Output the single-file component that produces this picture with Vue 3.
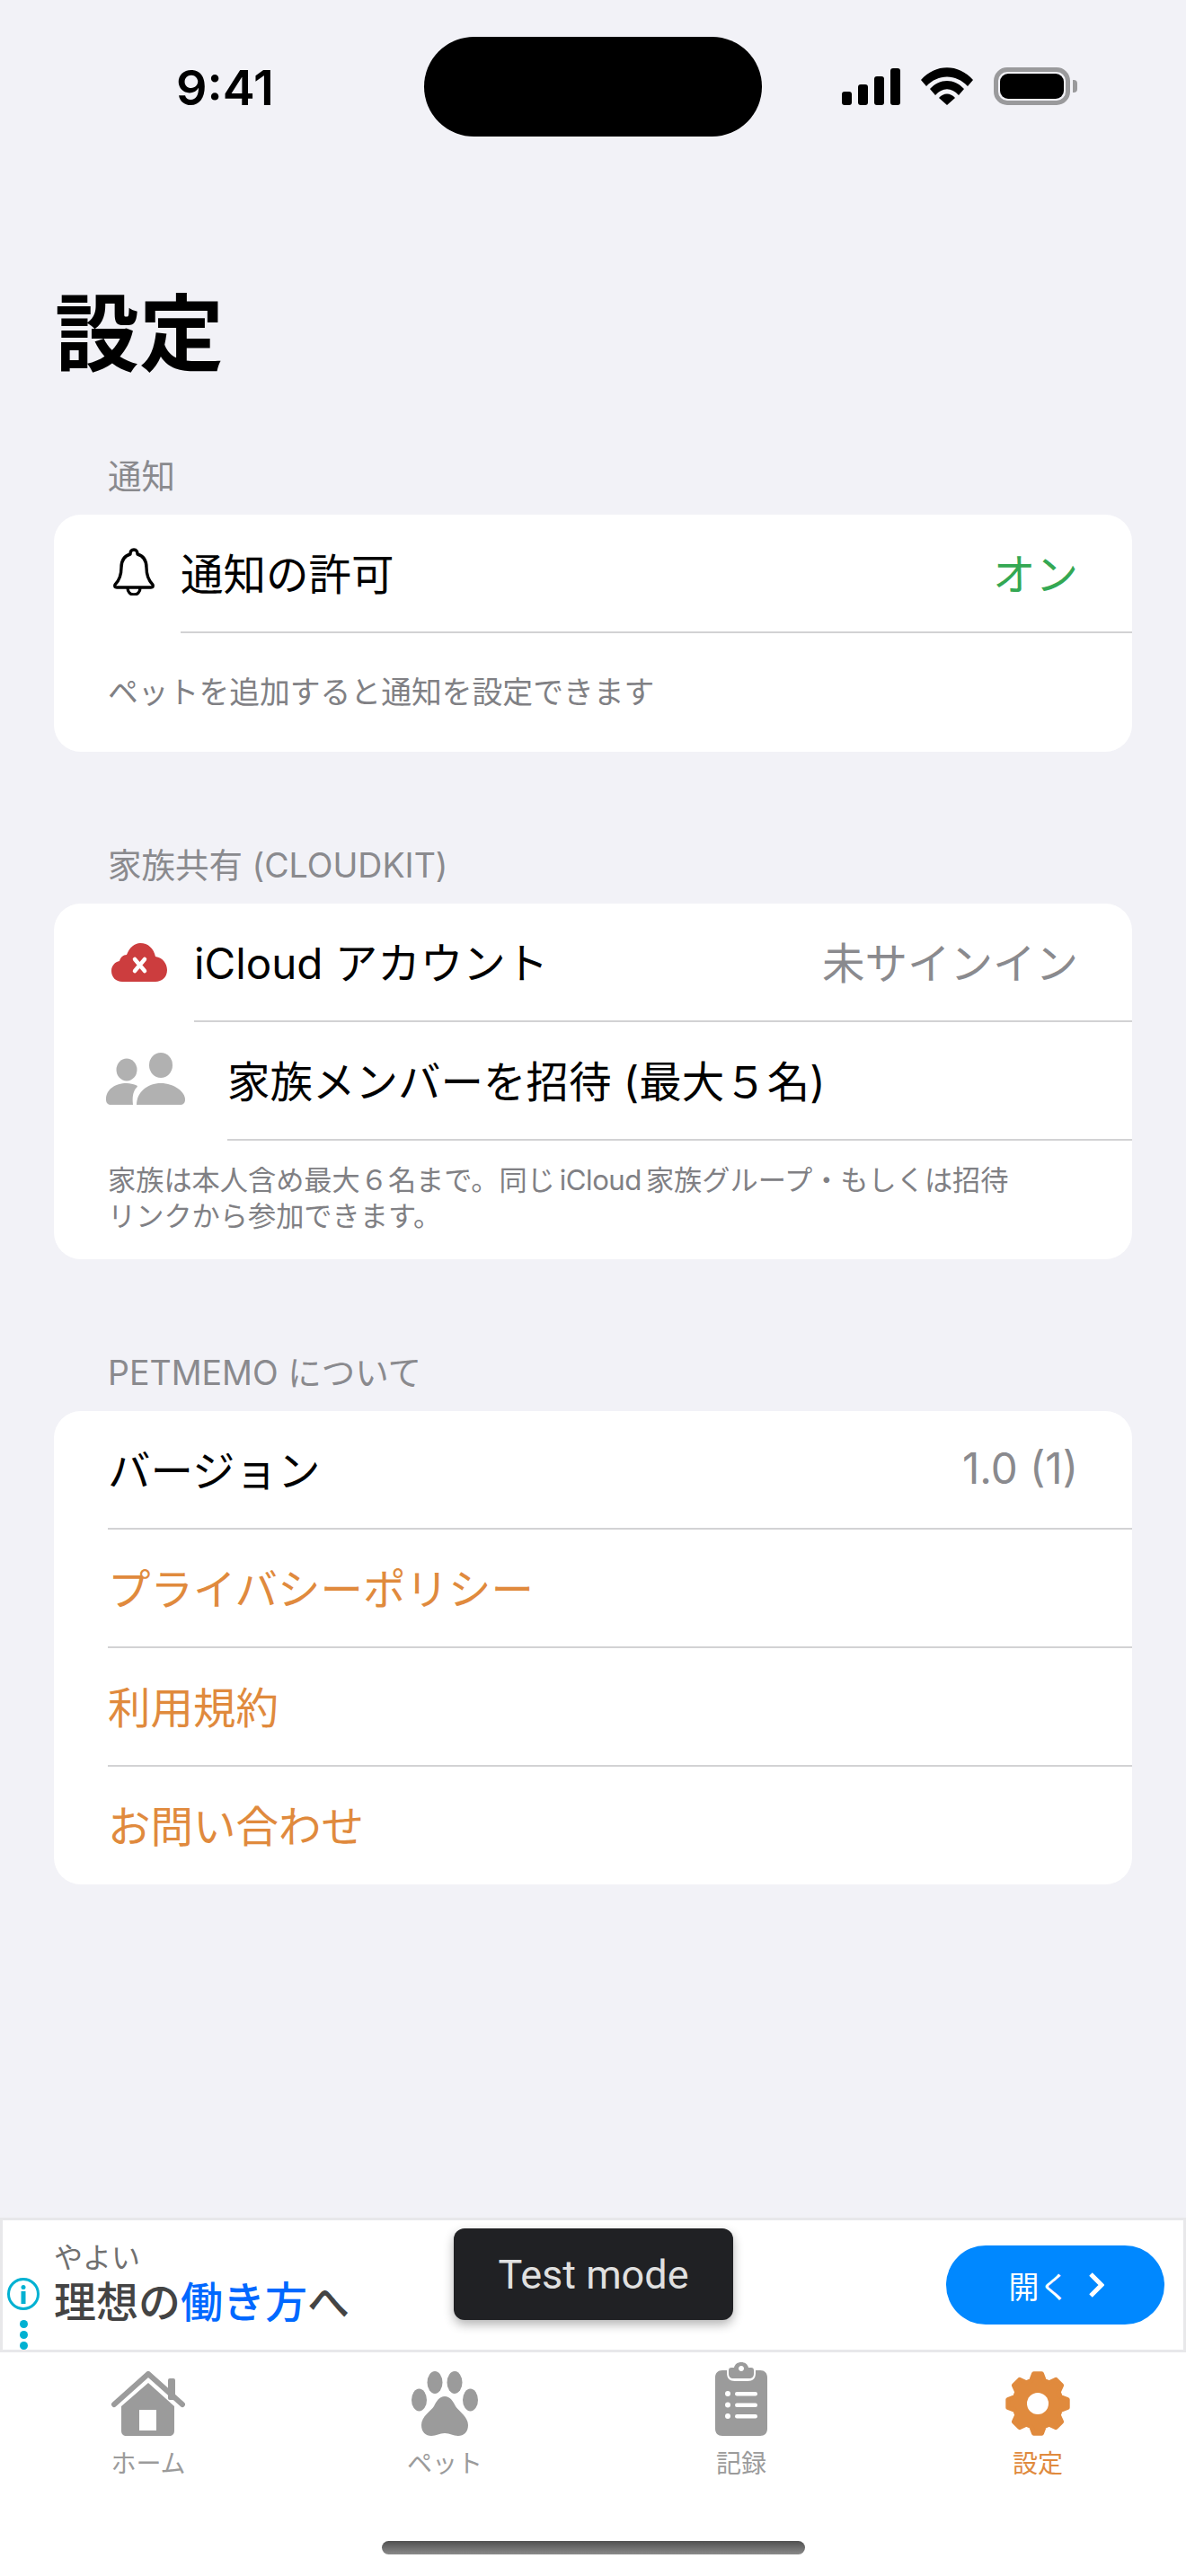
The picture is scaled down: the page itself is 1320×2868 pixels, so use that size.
<script setup>
const gearPath = (() => {
  // 8-tooth gear drawn around 36,36
  const teeth = 8
  const pts = []
  for (let i = 0; i < teeth; i++) {
    const a = (i * 2 * Math.PI) / teeth - Math.PI / 2
    const step = Math.PI / teeth
    const at = (r, d) => `${(36 + r * Math.cos(a + d)).toFixed(1)} ${(36 + r * Math.sin(a + d)).toFixed(1)}`
    pts.push(`${i ? 'L' : 'M'}${at(26.5, -step * 0.72)}`)
    pts.push(`L${at(33.5, -step * 0.34)}`)
    pts.push(`L${at(33.5, step * 0.34)}`)
    pts.push(`L${at(26.5, step * 0.72)}`)
  }
  return pts.join(' ') + ' Z'
})()

const aboutRows = [
  { label: 'バージョン', value: '1.0 (1)' },
  { label: 'プライバシーポリシー', link: true },
  { label: '利用規約', link: true },
  { label: 'お問い合わせ', link: true },
]
</script>

<template>
  <div class="screen">
    <!-- ステータスバー -->
    <header class="status">
      <span class="status__time">9:41</span>
      <span class="status__island"></span>
      <div class="status__icons">
        <svg class="ico-signal" viewBox="0 0 65 41" fill="#000">
          <rect x="0" y="26" width="11" height="15" rx="3" />
          <rect x="18" y="18" width="11" height="23" rx="3" />
          <rect x="36" y="9" width="11" height="32" rx="3" />
          <rect x="54" y="0" width="11" height="41" rx="3" />
        </svg>
        <svg class="ico-wifi" viewBox="0 0 58 42" fill="#000">
          <path d="M0 14C16-4.500 42-4.500 58 14L52 21C39 7 19 7 6 21Z" />
          <path d="M10 24C21 12 37 12 48 24L42 31C34 22 24 22 16 31Z" />
          <path d="M20 34C25 28 33 28 38 34L29 42Z" />
        </svg>
        <div class="battery">
          <div class="battery__body"><div class="battery__fill"></div></div>
          <div class="battery__nub"></div>
        </div>
      </div>
    </header>

    <main class="content">
      <h1 class="title">設定</h1>

      <section class="section">
        <h2 class="section__head">通知</h2>
        <div class="card">
          <div class="row">
            <svg class="ico-bell" viewBox="0 0 48 54" fill="none" stroke="#000" stroke-width="3.400" stroke-linejoin="round">
              <path d="M24 3C21 3 20 5 20 8C13 10 10 15 10 23C10 32 8 37 3 42C2 44 3 45 5 45H43C45 45 46 44 45 42C40 37 38 32 38 23C38 15 35 10 28 8C28 5 27 3 24 3Z" />
              <path d="M17 45C17 50 20 53 24 53C28 53 31 50 31 45" />
            </svg>
            <div class="row__body row__body--bell">
              <span>通知の許可</span>
              <span class="row__value row__value--on">オン</span>
            </div>
          </div>
          <p class="card__note card__note--single">ペットを追加すると通知を設定できます</p>
        </div>
      </section>

      <section class="section">
        <h2 class="section__head">家族共有 (CLOUDKIT)</h2>
        <div class="card">
          <div class="row">
            <svg class="ico-cloud" viewBox="0 0 62 43" fill="#cc3d3e">
              <path d="M12 43C5 43 0 38 0 31C0 25 4 21 9 20C10 16 13 13 17 13C20 5 26 0 32 0C41 0 47 6 49 15C57 16 62 23 62 30C62 38 56 43 49 43Z" />
              <path d="M26 18L37 31M37 18L26 31" stroke="#fff" stroke-width="4.500" stroke-linecap="round" fill="none" />
            </svg>
            <div class="row__body row__body--cloud">
              <span>iCloud アカウント</span>
              <span class="row__value">未サインイン</span>
            </div>
          </div>
          <div class="row">
            <svg class="ico-people" viewBox="0 0 88 58" fill="#b1b1b1">
              <ellipse cx="23" cy="19" rx="11.500" ry="12.500" />
              <ellipse cx="61" cy="14" rx="13" ry="14" />
              <path d="M0 52C0 41 10 34 23 34C27 34 30 35 33 36C36 37 35 38 33 40C30 44 29 50 30 58H6C2 58 0 56 0 52Z" />
              <path d="M34 58C34 44 46 34 61 34C76 34 88 44 88 52C88 56 86 58 82 58Z" />
            </svg>
            <div class="row__body row__body--people">
              <span>家族メンバーを招待 (最大５名)</span>
            </div>
          </div>
          <p class="card__note">家族は本人含め最大６名まで。同じ<span class="card__latin">iCloud</span>家族グループ・もしくは招待<br />リンクから参加できます。</p>
        </div>
      </section>

      <section class="section">
        <h2 class="section__head">PETMEMO について</h2>
        <div class="card">
          <div v-for="(item, i) in aboutRows" :key="item.label" class="row">
            <div class="row__body" :class="{ 'row__body--last': i === aboutRows.length - 1 }">
              <span :class="{ 'row__link': item.link }">{{ item.label }}</span>
              <span v-if="item.value" class="row__value">{{ item.value }}</span>
            </div>
          </div>
        </div>
      </section>
    </main>

    <!-- 広告バナー -->
    <aside class="ad">
      <div class="ad__info">
        <svg class="ico-info" viewBox="0 0 36 36" fill="none">
          <circle cx="18" cy="18" r="16.500" stroke="#00b1d2" stroke-width="3" />
          <circle cx="18" cy="10.500" r="2.500" fill="#00b1d2" />
          <rect x="15.500" y="15" width="5" height="14" fill="#00b1d2" />
        </svg>
        <div class="ad__dots"><i></i><i></i><i></i></div>
      </div>
      <div class="ad__text">
        <div class="ad__brand">やよい</div>
        <div class="ad__copy">理想の<em>働き方</em>へ</div>
      </div>
      <button class="ad__btn">
        <span>開く</span>
        <svg class="ico-chev" viewBox="0 0 18 28" fill="none" stroke="#fff" stroke-width="5">
          <path d="M3 2L15 14L3 26" />
        </svg>
      </button>
      <div class="toast">Test mode</div>
    </aside>

    <!-- タブバー -->
    <nav class="tabs">
      <div class="tab">
        <div class="tab__icon">
          <svg class="ico-home" viewBox="0 0 82 72">
            <path d="M3 37L41 3L79 37" fill="none" stroke="#9b9b9b" stroke-width="6" stroke-linecap="round" stroke-linejoin="round" />
            <rect x="63" y="8" width="8" height="24" rx="2" fill="#9b9b9b" />
            <path fill-rule="evenodd" fill="#9b9b9b" d="M41 13L70 39V66C70 70 68 72 64 72H17C13 72 11 70 11 66V39ZM31 43V66H50V43Z" />
          </svg>
        </div>
        <span class="tab__label">ホーム</span>
      </div>
      <div class="tab">
        <div class="tab__icon">
          <svg class="ico-paw" viewBox="0 0 74 72" fill="#9b9b9b">
            <ellipse cx="8.500" cy="32" rx="8.500" ry="12.500" />
            <ellipse cx="26" cy="12.500" rx="8.500" ry="12.500" />
            <ellipse cx="48" cy="12.500" rx="8.500" ry="12.500" />
            <ellipse cx="65.500" cy="32" rx="8.500" ry="12.500" />
            <path d="M37 28C43 28 46 33 49 39C52 44 63 50 63 60C63 68 58 72 52 72C46 72 43 69 37 69C31 69 28 72 22 72C16 72 11 68 11 60C11 50 22 44 25 39C28 33 31 28 37 28Z" />
          </svg>
        </div>
        <span class="tab__label">ペット</span>
      </div>
      <div class="tab">
        <div class="tab__icon">
          <svg class="ico-clip" viewBox="0 0 58 82">
            <path fill="#9b9b9b" d="M8 9H13V12C13 18 16 21 22 21H36C42 21 45 18 45 12V9H50C55 9 58 12 58 17V74C58 79 55 82 50 82H8C3 82 0 79 0 74V17C0 12 3 9 8 9Z" />
            <path fill="#9b9b9b" fill-rule="evenodd" d="M29 0C33 0 36 2 37 6H40C42 6 43 7 43 9V13C43 16 41 18 38 18H20C17 18 15 16 15 13V9C15 7 16 6 18 6H21C22 2 25 0 29 0ZM29 4C27 4 26 5.500 26 7C26 8.500 27 10 29 10C31 10 32 8.500 32 7C32 5.500 31 4 29 4Z" />
            <g fill="#fff">
              <circle cx="14" cy="35" r="3" />
              <circle cx="14" cy="47.500" r="3" />
              <circle cx="14" cy="60" r="3" />
              <rect x="22" y="33" width="25" height="4.500" rx="2.200" />
              <rect x="22" y="45.500" width="25" height="4.500" rx="2.200" />
              <rect x="22" y="58" width="25" height="4.500" rx="2.200" />
            </g>
          </svg>
        </div>
        <span class="tab__label">記録</span>
      </div>
      <div class="tab tab--active">
        <div class="tab__icon">
          <svg class="ico-gear" viewBox="0 0 72 72">
            <path :d="gearPath" fill="#e08a3d" stroke="#e08a3d" stroke-width="5" stroke-linejoin="round" />
            <circle cx="36" cy="36" r="12" fill="#fff" />
          </svg>
        </div>
        <span class="tab__label">設定</span>
      </div>
    </nav>

    <div class="home-bar"><span></span></div>
  </div>
</template>

<style>
html, body { margin: 0; background: #f2f2f7; }
</style>

<style scoped>
.screen {
  display: flex;
  flex-direction: column;
  width: 1320px;
  height: 2868px;
  overflow: hidden;
  position: relative;
  background: #f2f2f7;
  color: #000;
  font-family: Inter, "Noto Sans CJK JP", sans-serif;
}

/* ── Status bar ─────────────────────────────────────────── */
.status {
  height: 193px;
  flex-shrink: 0;
  position: relative;
}
.status__time {
  position: absolute;
  left: 196px;
  top: 66px;
  font-size: 54px;
  line-height: 63px;
  font-weight: 600;
}
.status__island {
  position: absolute;
  left: 472px;
  top: 41px;
  width: 376px;
  height: 111px;
  border-radius: 56px;
  background: #000;
}
.status__icons {
  position: absolute;
  left: 937px;
  top: 75px;
  display: flex;
  align-items: flex-end;
  height: 42px;
}
.ico-signal { width: 65px; height: 41px; display: block; }
.ico-wifi { width: 58px; height: 42px; margin-left: 23px; display: block; }
.battery {
  display: flex;
  align-items: center;
  margin-left: 23px;
  height: 42px;
}
.battery__body {
  box-sizing: border-box;
  width: 85px;
  height: 42px;
  padding: 2px;
  border: 5px solid #9a9a9c;
  border-radius: 15px;
}
.battery__fill {
  height: 100%;
  background: #000;
  border-radius: 9px;
}
.battery__nub {
  width: 5px;
  height: 14px;
  margin-left: 3px;
  background: #9a9a9c;
  border-radius: 0 4px 4px 0;
}

/* ── Content ────────────────────────────────────────────── */
.content {
  flex: 1;
  padding: 0 60px;
}
.title {
  margin: 124px 0 82px 1px;
  font-size: 94px;
  line-height: 110px;
  font-weight: 700;
}
.section + .section { margin-top: 105px; }
.section__head {
  margin: 0 0 20px;
  padding-left: 60px;
  font-size: 37.500px;
  line-height: 44px;
  font-weight: 400;
  color: #8a8a8e;
}
.card {
  background: #fff;
  border-radius: 30px;
  overflow: hidden;
}
.row {
  display: flex;
  align-items: center;
  height: 132px;
  padding-left: 60px;
  font-size: 47.500px;
}
.row:last-child { height: 131px; }
.row__body {
  box-sizing: border-box;
  flex: 1;
  height: 100%;
  display: flex;
  align-items: center;
  justify-content: space-between;
  padding: 0 60px 3px 0;
  border-bottom: 2px solid #d2d2d4;
}
.row__body--last { border-bottom: none; padding-bottom: 5px; }
.row__body--bell { margin-left: 31px; }
.row__body--cloud { margin-left: 30px; }
.row__body--people { margin-left: 47px; }
.row__value { color: #8a8a8e; }
.row__value--on { color: #34a853; }
.row__link { color: #e08a3d; }

.card__note {
  margin: 0;
  box-sizing: border-box;
  height: 132px;
  padding: 24px 60px 0;
  font-size: 31.200px;
  line-height: 40px;
  color: #808084;
}
.card__latin { margin: 0 5px; letter-spacing: -0.5px; }
.card__note--single {
  display: flex;
  align-items: center;
  padding-top: 0;
  font-size: 33.800px;
}

.ico-bell { width: 48px; height: 54px; flex-shrink: 0; margin-left: 5px; margin-right: -3px; margin-top: -6px; }
.ico-cloud { width: 62px; height: 43px; flex-shrink: 0; margin-left: 4px; margin-top: -2px; }
.ico-people { width: 88px; height: 58px; flex-shrink: 0; margin-left: -2px; margin-top: -6px; }

/* ── Ad banner ──────────────────────────────────────────── */
.ad {
  position: relative;
  box-sizing: border-box;
  flex-shrink: 0;
  height: 150px;
  display: flex;
  align-items: center;
  padding: 0 21px 0 5px;
  background: #fff;
  border: 3px solid #e8e8ea;
}
.ad__info {
  width: 36px;
  display: flex;
  flex-direction: column;
  align-items: center;
  margin-top: 63px;
}
.ico-info { width: 36px; height: 36px; display: block; }
.ad__dots {
  display: flex;
  flex-direction: column;
  gap: 3px;
  margin-top: 11px;
}
.ad__dots i {
  width: 9px;
  height: 9px;
  border-radius: 50%;
  background: #00b1d2;
}
.ad__text {
  flex: 1;
  margin-left: 16px;
  margin-top: -3px;
}
.ad__brand {
  font-size: 32px;
  line-height: 40px;
  color: #707070;
}
.ad__copy {
  font-size: 47px;
  line-height: 58px;
  font-weight: 500;
  color: #444;
}
.ad__copy em {
  font-style: normal;
  color: #0068ff;
}
.ad__btn {
  display: flex;
  align-items: center;
  justify-content: center;
  gap: 20px;
  width: 243px;
  height: 88px;
  margin-top: 0;
  padding: 0 0 0 2px;
  border: none;
  border-radius: 44px;
  background: #0088ff;
  color: #fff;
  font-family: inherit;
  font-size: 34px;
}
.ico-chev { width: 18px; height: 28px; display: block; }
.toast {
  position: absolute;
  left: 502px;
  top: 9px;
  width: 311px;
  height: 102px;
  display: flex;
  align-items: center;
  justify-content: center;
  border-radius: 12px;
  background: #202124;
  color: #e0e0e0;
  font-family: Roboto, sans-serif;
  font-size: 45px;
  box-shadow: 0 5px 12px rgba(0, 0, 0, 0.3);
}

/* ── Tab bar ────────────────────────────────────────────── */
.tabs {
  flex-shrink: 0;
  display: grid;
  grid-template-columns: repeat(4, 1fr);
  height: 172px;
  background: #fff;
}
.tab {
  display: flex;
  flex-direction: column;
  align-items: center;
  color: #9b9b9b;
}
.tab--active { color: #e08a3d; }
.tab__icon {
  height: 93px;
  display: flex;
  align-items: flex-end;
}
.tab__label {
  margin-top: 14px;
  font-size: 28px;
  line-height: 34px;
}
.ico-home, .ico-gear { width: 82px; height: 72px; display: block; }
.ico-gear { width: 72px; }
.ico-paw { width: 74px; height: 72px; display: block; }
.ico-clip { width: 58px; height: 82px; display: block; margin-bottom: 0; }

.home-bar {
  flex-shrink: 0;
  height: 77px;
  background: #fff;
  display: flex;
  justify-content: center;
}
.home-bar span {
  width: 471px;
  height: 15px;
  margin-top: 38px;
  border-radius: 8px;
  background: linear-gradient(#505050, #8a8a8a);
}
</style>
